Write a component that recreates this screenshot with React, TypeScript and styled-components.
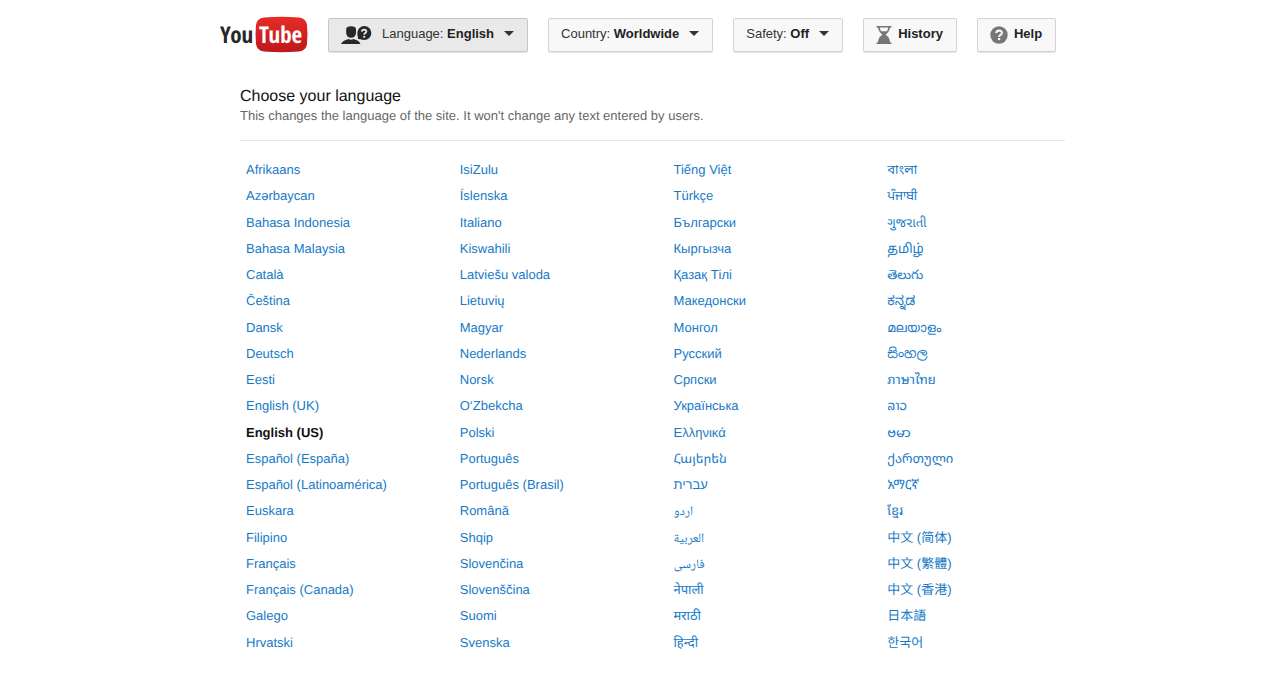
import React from "react";
import styled, { createGlobalStyle } from "styled-components";

const GlobalStyle = createGlobalStyle`
  *, *::before, *::after { box-sizing: border-box; }
  body {
    margin: 0;
    background: #fff;
    color: #222;
    font-family: "Liberation Sans", "Noto Sans", "Noto Naskh Arabic", "Noto Sans Arabic", "Noto Sans Bengali", "Noto Sans Gurmukhi",
      "Noto Sans Gujarati", "Noto Sans Tamil", "Noto Sans Kannada", "Noto Sans Sinhala", "Noto Sans Thai Looped",
      "Noto Sans Lao", "Noto Sans Myanmar", "Noto Sans Georgian", "Noto Sans Armenian", "Noto Sans Ethiopic",
      "Noto Sans Khmer", "Noto Sans CJK SC", "Noto Sans CJK KR", sans-serif;
    font-size: 13px;
    text-rendering: geometricPrecision;
  }
`;

const Page = styled.div`
  display: flex;
  flex-direction: column;
  max-width: 850px;
  min-height: 100vh;
  margin: 0 auto;
  padding: 16px 0 19px 5px;
`;

const Header = styled.header`
  display: flex;
  align-items: center;
  gap: 20px;
  height: 37px;
`;

const LogoLink = styled.a`
  display: block;
  width: 88px;
  height: 37px;
`;

const PickerButton = styled.button<{ $active?: boolean }>`
  display: flex;
  align-items: center;
  height: 34px;
  padding: 0 13px 0 12px;
  border: 1px solid ${(p) => (p.$active ? "#c6c6c6" : "#d3d3d3")};
  border-radius: 2px;
  background: ${(p) => (p.$active ? "#e9e9e9" : "#f8f8f8")};
  box-shadow: 0 1px 0 rgba(0, 0, 0, 0.1);
  color: #333;
  font: inherit;
  line-height: 16px;
  white-space: pre;
  cursor: pointer;

  b { color: #222; }
`;

const Label = styled.span`
  padding-bottom: 2px;
`;

const IconSlot = styled.span<{ $gap: number }>`
  display: flex;
  margin-right: ${(p) => p.$gap}px;
`;

const Caret = styled.span`
  margin: 0 0 2px 10px;
  border: 5px solid transparent;
  border-top-color: #333;
  border-bottom-width: 0;
`;

const Main = styled.main`
  display: flex;
  flex: 1;
  flex-direction: column;
  margin: 34px 0 0 20px;
`;

const Title = styled.h1`
  margin: 0;
  color: #111;
  font-size: 16px;
  font-weight: 400;
  line-height: 20px;
`;

const Hint = styled.p`
  margin: 0;
  padding-bottom: 16px;
  border-bottom: 1px solid #e6e6e6;
  color: #666;
  line-height: 17px;
`;

const LanguageList = styled.ul`
  display: grid;
  flex: 1;
  grid-auto-flow: column;
  grid-template-columns: repeat(4, 1fr);
  grid-template-rows: repeat(19, 1fr);
  margin: 16px -36px 0 0;
  padding: 0 0 0 6px;
  list-style: none;
`;

const LanguageItem = styled.li`
  display: flex;
  align-items: center;
  height: 26px;
  line-height: 18px;
`;

const LanguageLink = styled.a`
  color: #167ac6;
  text-decoration: none;
`;

const Current = styled.strong`
  color: #111;
`;

const CURRENT_LANGUAGE = "English (US)";

const languages: [string, string][] = [
  ["af", "Afrikaans"], ["az", "Azərbaycan"], ["id", "Bahasa Indonesia"], ["ms", "Bahasa Malaysia"],
  ["ca", "Català"], ["cs", "Čeština"], ["da", "Dansk"], ["de", "Deutsch"], ["et", "Eesti"],
  ["en-GB", "English (UK)"], ["en-US", "English (US)"], ["es-ES", "Español (España)"],
  ["es-419", "Español (Latinoamérica)"], ["eu", "Euskara"], ["fil", "Filipino"], ["fr", "Français"],
  ["fr-CA", "Français (Canada)"], ["gl", "Galego"], ["hr", "Hrvatski"],
  ["zu", "IsiZulu"], ["is", "Íslenska"], ["it", "Italiano"], ["sw", "Kiswahili"],
  ["lv", "Latviešu valoda"], ["lt", "Lietuvių"], ["hu", "Magyar"], ["nl", "Nederlands"],
  ["no", "Norsk"], ["uz", "O‘Zbekcha"], ["pl", "Polski"], ["pt-PT", "Português"],
  ["pt-BR", "Português (Brasil)"], ["ro", "Română"], ["sq", "Shqip"], ["sk", "Slovenčina"],
  ["sl", "Slovenščina"], ["fi", "Suomi"], ["sv", "Svenska"],
  ["vi", "Tiếng Việt"], ["tr", "Türkçe"], ["bg", "Български"], ["ky", "Кыргызча"],
  ["kk", "Қазақ Тілі"], ["mk", "Македонски"], ["mn", "Монгол"], ["ru", "Русский"],
  ["sr", "Српски"], ["uk", "Українська"], ["el", "Ελληνικά"], ["hy", "Հայերեն"],
  ["iw", "עברית"], ["ur", "اردو"], ["ar", "العربية"], ["fa", "فارسی"],
  ["ne", "नेपाली"], ["mr", "मराठी"], ["hi", "हिन्दी"],
  ["bn", "বাংলা"], ["pa", "ਪੰਜਾਬੀ"], ["gu", "ગુજરાતી"], ["ta", "தமிழ்"], ["te", "తెలుగు"],
  ["kn", "ಕನ್ನಡ"], ["ml", "മലയാളം"], ["si", "සිංහල"], ["th", "ภาษาไทย"], ["lo", "ລາວ"],
  ["my", "ဗမာ"], ["ka", "ქართული"], ["am", "አማርኛ"], ["km", "ខ្មែរ"],
  ["zh-CN", "中文 (简体)"], ["zh-TW", "中文 (繁體)"], ["zh-HK", "中文 (香港)"],
  ["ja", "日本語"], ["ko", "한국어"],
];

function Logo() {
  return (
    <svg width="88" height="37" viewBox="0 0 88 37" role="img" aria-label="YouTube">
      <defs>
        <linearGradient id="tube" x1="0" y1="0" x2="0" y2="1">
          <stop offset="0" stopColor="#e52d27" />
          <stop offset="1" stopColor="#bf171d" />
        </linearGradient>
      </defs>
      <path
        d="M44 1.5Q61 0 79 1.5Q86 2 87 9Q88 18 87 28Q86 35 79 35.5Q61 37 44 35.5Q37 35 36 28Q35 18 36 9Q37 2 44 1.5Z"
        fill="url(#tube)"
      />
      <g fontFamily='"Open Sans Condensed", "Roboto Condensed", "Liberation Sans", sans-serif' fontSize="23" fontWeight="700">
        <text x="0" y="27" fill="#282828">You</text>
        <text x="39" y="27" fill="#fff">Tube</text>
      </g>
    </svg>
  );
}

function LanguageIcon() {
  return (
    <svg width="32" height="20" viewBox="0 0 32 20" aria-hidden="true">
      <path d="M5.2 4Q5.5 1.2 10 1.2Q14.8 1.2 15 4V8Q14.6 12.6 10 12.8Q5.6 12.6 5.2 8Z" fill="#282828" />
      <path d="M0 19Q1.5 15.6 7.5 14Q10 15.6 12.5 14Q18.5 15.6 19.5 19Z" fill="#282828" />
      <path d="M16.6 9L17 14L22 14.6Z" fill="#282828" />
      <circle cx="23.3" cy="8" r="7" fill="#282828" />
      <path d="M20.8 6.6Q21 4.6 23.2 4.6Q25.4 4.7 25.4 6.5Q25.3 7.6 24 8.3Q23.2 8.8 23.2 9.8" fill="none" stroke="#e9e9e9" strokeWidth="1.8" />
      <circle cx="23.2" cy="11.8" r="1.1" fill="#e9e9e9" />
    </svg>
  );
}

function HourglassIcon() {
  return (
    <svg width="16" height="18" viewBox="0 0 16 18" aria-hidden="true">
      <path d="M0.5 0H15.5V1.4H0.5ZM0.5 16.6H15.5V18H0.5Z" fill="#777" />
      <path d="M2 1Q2.2 5.6 6.4 8.8Q2 11.4 1.8 17H14.2Q14 11.4 9.6 8.8Q13.8 5.6 14 1Z" fill="#777" />
      <path d="M3.8 1.4H12.2Q12 3.6 10.8 5.2H5.2Q4 3.6 3.8 1.4Z" fill="#f8f8f8" />
    </svg>
  );
}

function HelpIcon() {
  return (
    <svg width="18" height="18" viewBox="0 0 18 18" aria-hidden="true">
      <circle cx="9" cy="9" r="8.7" fill="#777" />
      <path d="M6.2 7.1Q6.4 4.6 9.1 4.6Q11.9 4.7 11.9 7Q11.8 8.3 10.3 9.1Q9.1 9.8 9.1 11" fill="none" stroke="#f8f8f8" strokeWidth="2" />
      <rect x="8" y="12" width="2.2" height="2.1" fill="#f8f8f8" />
    </svg>
  );
}

export default function App() {
  return (
    <>
      <GlobalStyle />
      <Page>
        <Header>
          <LogoLink href="#home"><Logo /></LogoLink>
          <PickerButton $active aria-expanded="true">
            <IconSlot $gap={9}><LanguageIcon /></IconSlot>
            <Label>Language: <b>English</b></Label>
            <Caret />
          </PickerButton>
          <PickerButton>
            <Label>Country: <b>Worldwide</b></Label>
            <Caret />
          </PickerButton>
          <PickerButton>
            <Label>Safety: <b>Off</b></Label>
            <Caret />
          </PickerButton>
          <PickerButton>
            <IconSlot $gap={6}><HourglassIcon /></IconSlot>
            <Label><b>History</b></Label>
          </PickerButton>
          <PickerButton>
            <IconSlot $gap={6}><HelpIcon /></IconSlot>
            <Label><b>Help</b></Label>
          </PickerButton>
        </Header>
        <Main>
          <Title>Choose your language</Title>
          <Hint>This changes the language of the site. It won't change any text entered by users.</Hint>
          <LanguageList>
            {languages.map(([code, name]) => (
              <LanguageItem key={code}>
                {name === CURRENT_LANGUAGE ? (
                  <Current>{name}</Current>
                ) : (
                  <LanguageLink href={`#${code}`}>{name}</LanguageLink>
                )}
              </LanguageItem>
            ))}
          </LanguageList>
        </Main>
      </Page>
    </>
  );
}
